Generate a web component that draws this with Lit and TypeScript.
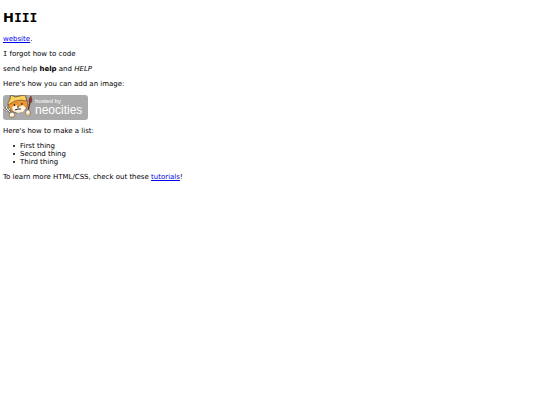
import { LitElement, html, css } from "lit";
import { customElement } from "lit/decorators.js";

@customElement("app-root")
class AppRoot extends LitElement {
  static styles = css`
    :host { display: block; padding: 0 3px; font: 7px/8px "DejaVu Sans", Verdana, sans-serif; color: #000; }
    h1 { font-size: 13px; line-height: 16px; margin: 10px 0 9px; }
    p { margin: 0 0 7px; }
    a { color: #00e; }
    .slab { font-family: "DejaVu Sans Mono", monospace; }
    ul { margin: 7px 0; padding: 0 0 0 10px; list-style: none; }
    li { display: flex; align-items: center; gap: 5px; }
    li::before { content: ""; width: 2px; height: 2px; border-radius: 1px; background: #000; }
    svg { display: block; }
    .logo { font-family: "Liberation Sans", Arial, sans-serif; fill: #fff; }
    .small { font-size: 6px; }
    .large { font-size: 12px; }
  `;
  render() {
    return html`
      <h1>H<span class="slab">III</span></h1>
      <p><a href="#website">website</a>.</p>
      <p><span class="slab">I</span> forgot how to code</p>
      <p>send help <strong>help</strong> and <em>HELP</em></p>
      <p>Here's how you can add an image:</p>
      <p>
        <svg width="85" height="25" viewBox="0 0 85 25" role="img" aria-label="Hosted by Neocities">
          <rect width="85" height="25" rx="3" fill="#aaa" />
          <g stroke="#5a4638" stroke-width=".6" stroke-linejoin="round">
            <path d="M5 10 7 4 8 0l4 2 5-1 5-1 2 5 1 5-2 4-4 3-6 1-6-3Z" fill="#ec9633" />
            <path d="M5 8 7 4 8 0l4 2 5-1 5-1 2 6-6-1-6 1-7 4Z" fill="#fbd35e" />
            <path d="m9 12 4-2 3 2 4-2 3 3-3 4-5 1-5-2Z" fill="#fff6e6" stroke="none" />
            <path d="m9 19-5-5M1 14l3 2M1 14l-1-3M4 14l-1-3M5 16l2-3" fill="none" stroke="#665f58" stroke-width="2" />
            <path d="m9 19-5-5M1 14l3 2M1 14l-1-3M4 14l-1-3M5 16l2-3" fill="none" stroke="#f2eee0" stroke-width="1" />
            <path d="m25 16 2-9" stroke="#653526" stroke-width="1.4" />
            <path d="m26 7 0-3 2-3 1 4-1 3Z" fill="#9c292c" />
            <circle cx="9" cy="20" r="2.8" fill="#fff7df" />
            <ellipse cx="25" cy="18" rx="2.4" ry="3.2" fill="#fff7df" />
          </g>
          <path d="M8 21q1 2 3 0M24 19q2 2 3-1" stroke="#e7a84e" fill="none" />
          <path d="M11 9l1 2m7-3v2M14 12h2m-4 3 3-1 3 0" stroke="#392a25" stroke-width="1.2" fill="none" />
          <g class="logo"><text class="small" x="32" y="8">hosted by</text><text class="large" x="32" y="19">neocities</text></g>
        </svg>
      </p>
      <p>Here's how to make a list:</p>
      <ul><li>First thing</li><li>Second thing</li><li>Third thing</li></ul>
      <p>To learn more HTML/CSS, check out these <a href="#tutorials">tutorials</a>!</p>
    `;
  }
}
